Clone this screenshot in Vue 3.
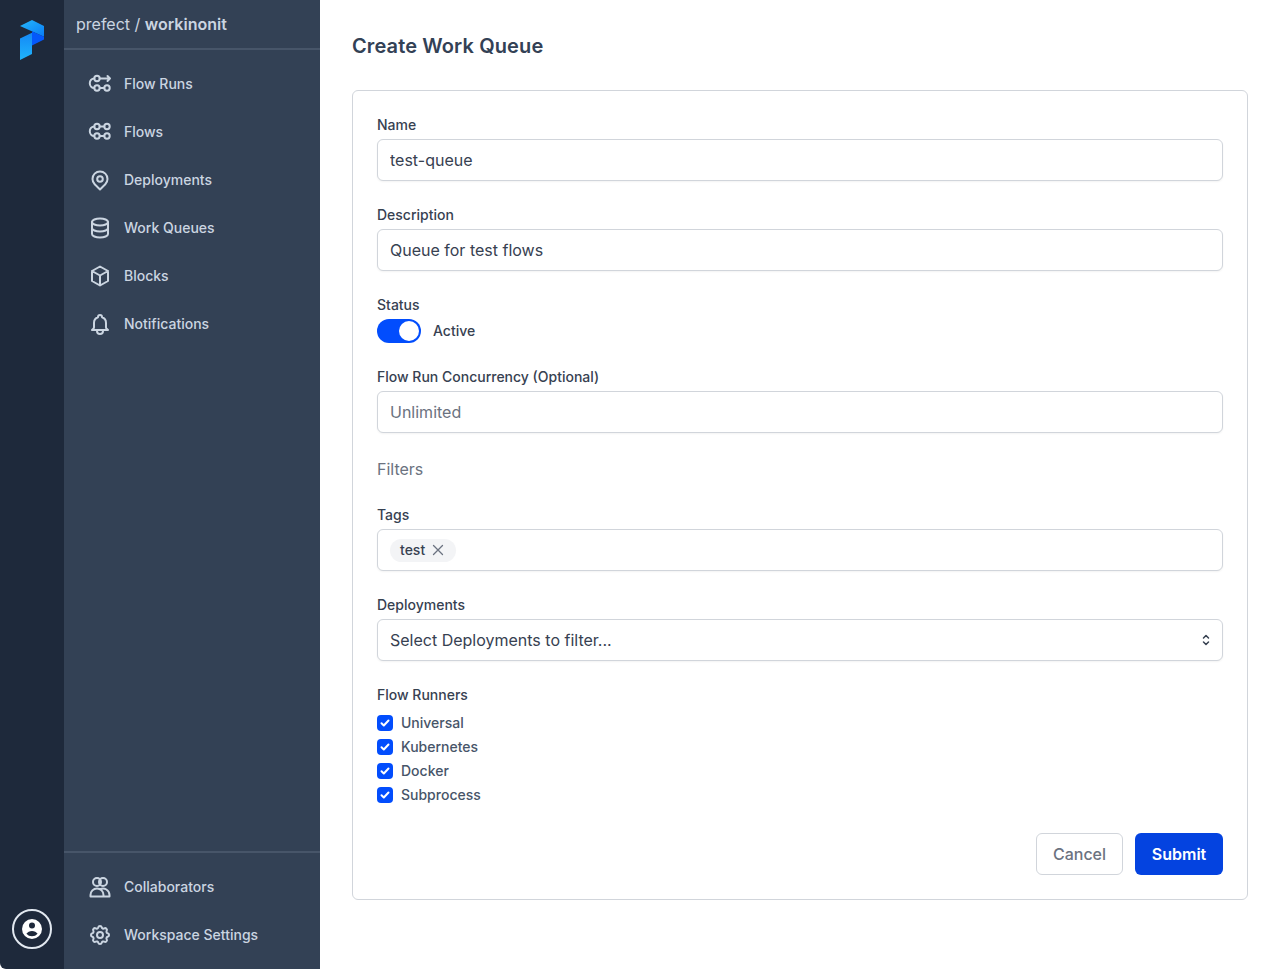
<script setup>
import { ref } from 'vue'

const name = ref('test-queue')
const description = ref('Queue for test flows')
const concurrency = ref('')
const active = ref(true)
const tags = ref(['test'])

const runners = ref([
  { label: 'Universal', checked: true },
  { label: 'Kubernetes', checked: true },
  { label: 'Docker', checked: true },
  { label: 'Subprocess', checked: true },
])

const mainNav = [
  { label: 'Flow Runs', icon: 'runs' },
  { label: 'Flows', icon: 'flows' },
  { label: 'Deployments', icon: 'pin' },
  { label: 'Work Queues', icon: 'database' },
  { label: 'Blocks', icon: 'cube' },
  { label: 'Notifications', icon: 'bell' },
]

const bottomNav = [
  { label: 'Collaborators', icon: 'users' },
  { label: 'Workspace Settings', icon: 'cog' },
]

const removeTag = (tag) => {
  tags.value = tags.value.filter((t) => t !== tag)
}
</script>

<template>
  <div class="layout">
    <aside class="rail">
      <svg class="logo" width="24" height="40" viewBox="0 0 24 40">
        <defs>
          <linearGradient id="logoTop" x1="0" y1="0" x2="1" y2="1">
            <stop offset="0" stop-color="#25b8fb" />
            <stop offset="1" stop-color="#0a7cf5" />
          </linearGradient>
          <linearGradient id="logoLeft" x1="0" y1="0" x2="0" y2="1">
            <stop offset="0" stop-color="#1488f6" />
            <stop offset="1" stop-color="#1fb4fb" />
          </linearGradient>
        </defs>
        <polygon points="0,6 12,0 24,6 24,16.700" fill="url(#logoTop)" />
        <polygon points="12,11.300 24,16.700 24,19.500 12,25.500" fill="#0458fb" />
        <polygon points="0,18.500 12,12.700 12,34 0,40" fill="url(#logoLeft)" />
      </svg>
      <div class="avatar">
        <svg width="24" height="24" viewBox="0 0 24 24">
          <path fill="#fff" fill-rule="evenodd" d="M22 12a10 10 0 1 1-20 0 10 10 0 0 1 20 0zm-7-3.500a3 3 0 1 1-6 0 3 3 0 0 1 6 0zM12 14c-2.400 0-4.500 1.100-5.600 2.800a7.500 7.500 0 0 0 11.200 0C16.500 15.100 14.400 14 12 14z" />
        </svg>
      </div>
    </aside>

    <nav class="sidebar">
      <div class="workspace">prefect / <strong>workinonit</strong></div>
      <ul class="nav-list">
        <li v-for="item in mainNav" :key="item.label" class="nav-item">
          <svg class="nav-icon" width="24" height="24" viewBox="0 0 24 24" fill="none" stroke="currentColor" stroke-width="2" stroke-linecap="round" stroke-linejoin="round">
            <template v-if="item.icon === 'runs'">
              <circle cx="9" cy="6.500" r="2.700" />
              <circle cx="9" cy="16" r="2.700" />
              <circle cx="19" cy="16" r="2.700" />
              <path d="M11.700 16h4.600M11.700 6.500H22M19.500 4l2.500 2.500L19.500 9M6.300 6.500C3.500 6.500 1.800 8.800 1.800 11.200S3.500 16 6.300 16" />
            </template>
            <template v-else-if="item.icon === 'flows'">
              <circle cx="9" cy="6.500" r="2.700" />
              <circle cx="19" cy="6.500" r="2.700" />
              <circle cx="9" cy="16" r="2.700" />
              <circle cx="19" cy="16" r="2.700" />
              <path d="M11.700 6.500h4.600M11.700 16h4.600M6.300 6.500C3.500 6.500 1.800 8.800 1.800 11.200S3.500 16 6.300 16" />
            </template>
            <template v-else-if="item.icon === 'pin'">
              <path d="M12 21.500l-5.300-5.300a7.500 7.500 0 1 1 10.600 0L12 21.500z" />
              <circle cx="12" cy="11" r="2.800" />
            </template>
            <template v-else-if="item.icon === 'database'">
              <ellipse cx="12" cy="6" rx="8" ry="3.500" />
              <path d="M4 6v12c0 1.900 3.600 3.500 8 3.500s8-1.600 8-3.500V6M4 12c0 1.900 3.600 3.500 8 3.500s8-1.600 8-3.500" />
            </template>
            <template v-else-if="item.icon === 'cube'">
              <path d="M12 2.500l8 4.500v10l-8 4.500-8-4.500V7l8-4.500zM4 7l8 4.500L20 7M12 11.500v10" />
            </template>
            <template v-else-if="item.icon === 'bell'">
              <path d="M15 18h5l-1.400-1.400A2 2 0 0 1 18 15.200V11a6 6 0 0 0-4-5.700V5a2 2 0 1 0-4 0v.3A6 6 0 0 0 6 11v4.200c0 .5-.2 1-.6 1.400L4 18h11zm0 0v1a3 3 0 1 1-6 0v-1" />
            </template>
          </svg>
          <span>{{ item.label }}</span>
        </li>
      </ul>

      <ul class="nav-list bottom">
        <li v-for="item in bottomNav" :key="item.label" class="nav-item">
          <svg class="nav-icon" width="24" height="24" viewBox="0 0 24 24" fill="none" stroke="currentColor" stroke-width="2" stroke-linecap="round" stroke-linejoin="round">
            <template v-if="item.icon === 'users'">
              <circle cx="9" cy="7" r="4" />
              <circle cx="15" cy="7" r="4" />
              <path d="M2.500 21.500v-1.500a6.500 6.500 0 0 1 13 0v1.500h-13zM15.500 21.500h6v-1.500a6.500 6.500 0 0 0-9.500-5.700" />
            </template>
            <template v-else>
              <path d="M10.300 4.300c.4-1.800 3-1.800 3.400 0a1.700 1.700 0 0 0 2.600 1.100c1.500-.9 3.300.8 2.400 2.400a1.700 1.700 0 0 0 1 2.500c1.800.4 1.800 3 0 3.400a1.700 1.700 0 0 0-1 2.600c.9 1.500-.9 3.300-2.400 2.400a1.700 1.700 0 0 0-2.600 1c-.4 1.800-3 1.800-3.400 0a1.700 1.700 0 0 0-2.600-1c-1.500.9-3.300-.9-2.400-2.400a1.700 1.700 0 0 0-1-2.600c-1.800-.4-1.800-3 0-3.400a1.700 1.700 0 0 0 1-2.500c-.9-1.600.9-3.300 2.400-2.400 1 .6 2.300.1 2.600-1.100z" />
              <circle cx="12" cy="12" r="3" />
            </template>
          </svg>
          <span>{{ item.label }}</span>
        </li>
      </ul>
    </nav>

    <main class="content">
      <h1>Create Work Queue</h1>

      <form class="card" @submit.prevent>
        <div class="field">
          <label for="wq-name">Name</label>
          <input id="wq-name" v-model="name" type="text" class="control">
        </div>

        <div class="field">
          <label for="wq-desc">Description</label>
          <input id="wq-desc" v-model="description" type="text" class="control">
        </div>

        <div class="field">
          <label>Status</label>
          <div class="status">
            <button type="button" class="toggle" :class="{ on: active }" @click="active = !active">
              <span class="knob"></span>
            </button>
            <span class="status-text">{{ active ? 'Active' : 'Paused' }}</span>
          </div>
        </div>

        <div class="field">
          <label for="wq-limit">Flow Run Concurrency (Optional)</label>
          <input id="wq-limit" v-model="concurrency" type="text" class="control" placeholder="Unlimited">
        </div>

        <div class="filters">Filters</div>

        <div class="field">
          <label>Tags</label>
          <div class="control tag-box">
            <span v-for="tag in tags" :key="tag" class="tag">
              <span class="tag-text">{{ tag }}</span>
              <svg width="14" height="14" viewBox="0 0 14 14" fill="none" stroke="#6b7280" stroke-width="1.300" stroke-linecap="round" @click="removeTag(tag)">
                <path d="M2.500 2.500l9 9M11.500 2.500l-9 9" />
              </svg>
            </span>
          </div>
        </div>

        <div class="field">
          <label>Deployments</label>
          <div class="control select">
            <span>Select Deployments to filter...</span>
            <svg width="16" height="16" viewBox="0 0 16 16" fill="none" stroke="#374151" stroke-width="1.500" stroke-linecap="round" stroke-linejoin="round">
              <path d="M5.500 6L8 3.500 10.500 6M5.500 10L8 12.500 10.500 10" />
            </svg>
          </div>
        </div>

        <div class="field runners">
          <label>Flow Runners</label>
          <div class="checks">
            <label v-for="runner in runners" :key="runner.label" class="check">
              <input v-model="runner.checked" type="checkbox" class="check-input">
              <span class="box">
                <svg width="12" height="12" viewBox="0 0 12 12" fill="none" stroke="#fff" stroke-width="2" stroke-linecap="round" stroke-linejoin="round">
                  <path d="M2.500 6.300l2.300 2.200 4.700-5" />
                </svg>
              </span>
              <span class="check-text">{{ runner.label }}</span>
            </label>
          </div>
        </div>

        <div class="actions">
          <button type="button" class="btn cancel">Cancel</button>
          <button type="submit" class="btn submit">Submit</button>
        </div>
      </form>
    </main>
  </div>
</template>

<style>
html, body {
  margin: 0;
  background: #fff;
}
</style>

<style scoped>
* {
  box-sizing: border-box;
}

.layout {
  display: flex;
  height: 969px;
  overflow: hidden;
  font-family: Inter, "Liberation Sans", sans-serif;
  color: #334155;
}

.rail {
  width: 64px;
  flex-shrink: 0;
  display: flex;
  flex-direction: column;
  align-items: center;
  justify-content: space-between;
  padding: 20px 0 20px;
  background: #1e293b;
  border-bottom-left-radius: 6px;
}

.logo {
  display: block;
}

.avatar {
  width: 40px;
  height: 40px;
  display: flex;
  align-items: center;
  justify-content: center;
  border: 2px solid #e2e8f0;
  border-radius: 50%;
}

.sidebar {
  width: 256px;
  flex-shrink: 0;
  display: flex;
  flex-direction: column;
  background: #334155;
  color: #cbd5e1;
}

.workspace {
  height: 50px;
  padding: 12px 12px 0;
  font-size: 16px;
  line-height: 24px;
  border-bottom: 2px solid #475569;
}

.workspace strong {
  font-weight: 600;
}

.nav-list {
  list-style: none;
  margin: 0;
  padding: 10px 24px 0;
}

.nav-list.bottom {
  margin-top: auto;
  padding-top: 10px;
  padding-bottom: 10px;
  border-top: 2px solid #475569;
}

.nav-item {
  height: 48px;
  display: flex;
  align-items: center;
  gap: 12px;
  font-size: 14px;
  line-height: 20px;
  font-weight: 500;
}

.nav-icon {
  flex-shrink: 0;
}

.content {
  flex: 1;
  padding: 32px 32px 0;
}

h1 {
  margin: 0 0 30px;
  font-size: 20px;
  line-height: 28px;
  font-weight: 600;
  letter-spacing: 0.12px;
  color: #334155;
}

.card {
  height: 810px;
  padding: 24px;
  display: flex;
  flex-direction: column;
  gap: 24px;
  border: 1px solid #d1d5db;
  border-radius: 6px;
}

.field {
  display: flex;
  flex-direction: column;
  gap: 4px;
}

.field > label {
  font-size: 14px;
  line-height: 20px;
  font-weight: 500;
  color: #374151;
}

.control {
  width: 100%;
  height: 42px;
  padding: 0 12px;
  border: 1px solid #d1d5db;
  border-radius: 6px;
  box-shadow: 0 1px 2px rgba(0, 0, 0, 0.05);
  background: #fff;
  font-family: inherit;
  font-size: 16px;
  color: #374151;
  outline: none;
}

.control::placeholder {
  color: #6b7280;
  opacity: 1;
}

.status {
  display: flex;
  align-items: center;
  gap: 12px;
}

.status-text {
  margin-top: -2px;
  font-size: 14px;
  font-weight: 500;
  color: #374151;
}

.toggle {
  width: 44px;
  height: 24px;
  padding: 2px;
  display: flex;
  border: none;
  border-radius: 12px;
  background: #cbd5e1;
}

.toggle.on {
  justify-content: flex-end;
  background: #024dfd;
}

.knob {
  width: 20px;
  height: 20px;
  border-radius: 50%;
  background: #fff;
}

.filters {
  font-size: 16px;
  line-height: 24px;
  color: #6b7280;
}

.tag-box {
  display: flex;
  align-items: center;
  gap: 6px;
}

.tag {
  display: inline-flex;
  align-items: center;
  gap: 6px;
  height: 23px;
  padding: 0 11px 0 10px;
  border-radius: 12px;
  background: #f3f4f6;
  font-size: 14px;
  font-weight: 500;
  color: #374151;
}

.tag-text {
  margin-top: -2px;
}

.select {
  display: flex;
  align-items: center;
  justify-content: space-between;
  padding-right: 8px;
}

.runners {
  gap: 6px;
}

.checks {
  display: flex;
  flex-direction: column;
}

.check {
  height: 24px;
  display: flex;
  align-items: center;
  gap: 8px;
  font-size: 14px;
  font-weight: 500;
  color: #475569;
}

.check-text {
  margin-top: -2px;
}

.check-input {
  display: none;
}

.box {
  width: 16px;
  height: 16px;
  display: flex;
  align-items: center;
  justify-content: center;
  border-radius: 4px;
  background: #024dfd;
}

.actions {
  margin-top: 2px;
  display: flex;
  justify-content: flex-end;
  gap: 12px;
}

.btn {
  height: 42px;
  padding: 0 16px;
  border-radius: 6px;
  font-family: inherit;
  font-size: 16px;
  font-weight: 500;
}

.cancel {
  width: 87px;
  padding: 0;
  border: 1px solid #d1d5db;
  background: #fff;
  color: #6b7280;
}

.submit {
  width: 88px;
  padding: 0;
  border: none;
  background: #0443e0;
  color: #fff;
  font-weight: 600;
}
</style>
